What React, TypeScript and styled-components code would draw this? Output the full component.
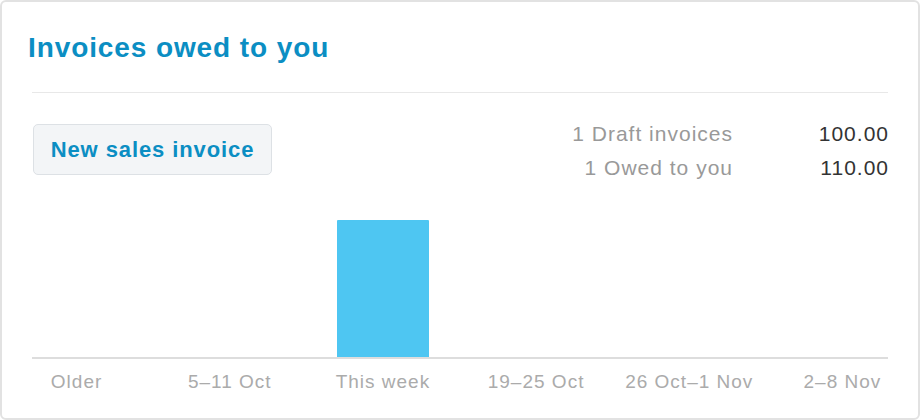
import React from "react";
import styled, { createGlobalStyle } from "styled-components";

const Global = createGlobalStyle`
  html, body { margin: 0; padding: 0; background: #ffffff; }
  body { font-family: "Liberation Sans", Arial, Helvetica, sans-serif; }
  * { box-sizing: border-box; }
`;

const Card = styled.section`
  width: 920px;
  height: 420px;
  border: 2px solid #e2e2e2;
  border-radius: 6px;
  background: #fff;
  padding: 0 30px;
  display: flex;
  flex-direction: column;
`;

const Title = styled.h2`
  margin: 0 0 0 -4px;
  padding-top: 30px;
  height: 90px;
  font-size: 28px;
  line-height: 32px;
  font-weight: 700;
  letter-spacing: 0.9px;
  color: #0b8ec3;
`;

const Divider = styled.hr`
  margin: 0;
  border: 0;
  height: 1px;
  background: #e8e8e8;
`;

const Toolbar = styled.div`
  display: flex;
  justify-content: space-between;
  align-items: flex-start;
  height: 51px;
  margin-top: 31px;
`;

const Button = styled.button`
  width: 239px;
  height: 51px;
  margin-left: 1px;
  border: 1px solid #dde1e5;
  border-radius: 5px;
  background: #f3f5f7;
  color: #0b8ec3;
  font-family: inherit;
  font-size: 22px;
  font-weight: 700;
  letter-spacing: 0.9px;
  cursor: pointer;
  padding: 0;
`;

const Stats = styled.dl`
  margin: -7px -1px 0 0;
  display: grid;
  grid-template-columns: auto 156px;
  row-gap: 0;
`;

const StatLabel = styled.dt`
  margin: 0;
  text-align: right;
  font-size: 21px;
  line-height: 34px;
  letter-spacing: 1px;
  color: #999999;
`;

const StatValue = styled.dd`
  margin: 0;
  text-align: right;
  font-size: 21px;
  line-height: 34px;
  letter-spacing: 1px;
  color: #333333;
`;

const Columns = styled.div`
  display: grid;
  grid-template-columns: repeat(6, 1fr);
  margin: 0 -31px 0 -32px;
`;

const BarArea = styled(Columns)`
  height: 182px;
  align-items: end;
`;

const BarSlot = styled.div`
  display: flex;
  justify-content: center;
  align-items: flex-end;
  height: 100%;
`;

const Bar = styled.div`
  width: 92px;
  background: #4ec6f2;
  border-radius: 1px 1px 0 0;
`;

const Axis = styled.div`
  height: 2px;
  background: #dddddd;
`;

const Labels = styled(Columns)`
  margin-top: 11px;
`;

const Label = styled.span`
  text-align: center;
  font-size: 19px;
  line-height: 24px;
  letter-spacing: 1px;
  color: #ababab;
  white-space: nowrap;
`;

const weeks = [
  { label: "Older", value: 0 },
  { label: "5–11 Oct", value: 0 },
  { label: "This week", value: 110 },
  { label: "19–25 Oct", value: 0 },
  { label: "26 Oct–1 Nov", value: 0 },
  { label: "2–8 Nov", value: 0 },
];

const maxValue = 110;
const maxBar = 137;

export default function App() {
  return (
    <>
      <Global />
      <Card>
        <Title>Invoices owed to you</Title>
        <Divider />
        <Toolbar>
          <Button>New sales invoice</Button>
          <Stats>
            <StatLabel>1 Draft invoices</StatLabel>
            <StatValue>100.00</StatValue>
            <StatLabel>1 Owed to you</StatLabel>
            <StatValue>110.00</StatValue>
          </Stats>
        </Toolbar>
        <BarArea>
          {weeks.map((w) => (
            <BarSlot key={w.label}>
              {w.value > 0 && (
                <Bar style={{ height: `${(w.value / maxValue) * maxBar}px` }} />
              )}
            </BarSlot>
          ))}
        </BarArea>
        <Axis />
        <Labels>
          {weeks.map((w) => (
            <Label key={w.label}>{w.label}</Label>
          ))}
        </Labels>
      </Card>
    </>
  );
}
